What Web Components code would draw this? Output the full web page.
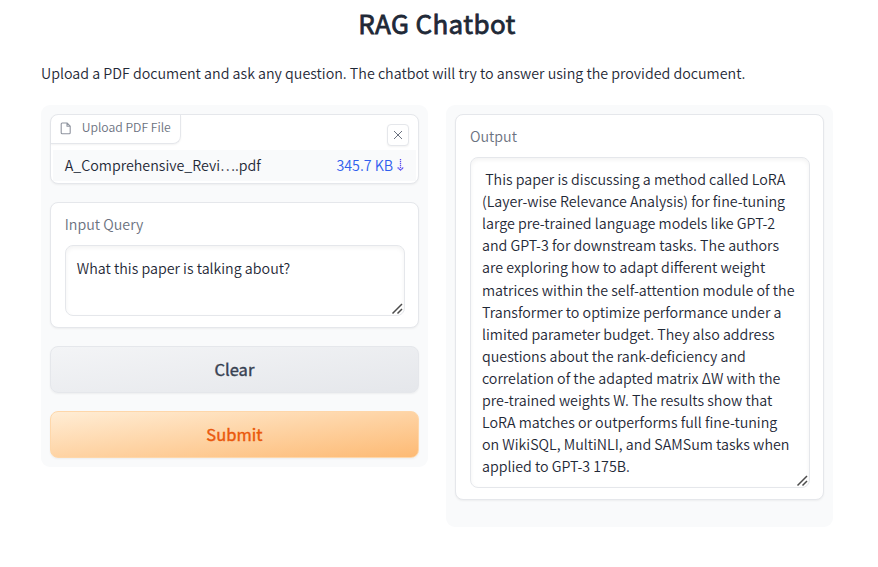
<!DOCTYPE html>
<html lang="en">
<head>
<meta charset="utf-8">
<title>RAG Chatbot</title>
<style>
body{margin:0;background:#fff;color:#1f2937;font:350 14.25px/22.08px "Noto Sans CJK SC","Noto Sans",sans-serif}
</style>
</head>
<body>
<rag-app></rag-app>
<script>
const define=(name,html)=>{
  const t=document.createElement('template');
  t.innerHTML=html;
  customElements.define(name,class extends HTMLElement{
    constructor(){super();this.attachShadow({mode:'open'}).append(t.content.cloneNode(true));}
  });
};

define('ui-panel',`<style>
:host{display:flex;flex-direction:column;gap:18px;box-sizing:border-box;padding:9.2px;background:#f9fafb;border-radius:9px;min-width:0}
</style><slot></slot>`);

define('ui-card',`<style>
:host{display:block;flex:none;box-sizing:border-box;background:#fff;border:1px solid #e5e7eb;border-radius:8px;box-shadow:0 1px 2px rgba(0,0,0,.05)}
</style><slot></slot>`);

define('text-field',`<style>
:host{display:flex;flex-direction:column;height:100%;box-sizing:border-box;padding:10px 12.8px 11px 13.6px}
.label{color:#6b7280;height:22px;margin-bottom:9.8px}
.box{position:relative;flex:1;box-sizing:border-box;border:1px solid #e5e7eb;border-radius:8px;padding:var(--text-top,11.3px) 11px 0;box-shadow:inset 0 2px 4px rgba(0,0,0,.05);white-space:pre}
svg{position:absolute;right:0;bottom:0}
</style><div class="label"><slot name="label"></slot></div>
<div class="box"><slot></slot><svg width="13" height="13" viewBox="0 0 13 13" fill="none" stroke="#4c4c4c" stroke-width="1.5"><path d="M1.5 11.5L11 2M6.5 11.5L11 7"/></svg></div>`);

define('text-line',`<style>:host{display:block;white-space:pre}</style><slot></slot>`);

define('ui-button',`<style>
:host{display:flex;flex:none;align-items:center;justify-content:center;box-sizing:border-box;height:47px;padding-bottom:1.2px;border:1px solid #e5e7eb;border-radius:8px;background:linear-gradient(to bottom right,#f3f4f6,#e5e7eb);box-shadow:0 1px 2px rgba(0,0,0,.05);color:#374151;font-size:16.5px;font-weight:400;-webkit-text-stroke:.4px currentColor}
:host([primary]){border-color:#fed7aa;background:linear-gradient(to bottom right,#ffedd5,#fdba74);color:#ea580c}
</style><span><slot></slot></span>`);

define('file-upload',`<style>
:host{display:flex;flex-direction:column;height:100%;position:relative}
.tab{display:flex;align-items:center;align-self:flex-start;gap:9.5px;box-sizing:border-box;width:130px;height:29px;padding:0 0 3.4px 9px;border:solid #e5e7eb;border-width:0 1px 1px 0;border-radius:8px 0 8px 0;box-shadow:0 1px 2px rgba(0,0,0,.05);color:#6b7280;font-size:12.2px;white-space:nowrap}
.tab svg{opacity:.75;flex:none;position:relative;top:1px}
.close{position:absolute;right:9px;top:9px;width:20px;height:20px;border:1px solid #e5e7eb;border-radius:4px;background:#fff;box-shadow:0 1px 2px rgba(0,0,0,.05);display:grid;place-items:center;color:#6b7280}
.row{display:flex;justify-content:space-between;align-items:center;box-sizing:border-box;height:31px;margin:6px 1.5px 0;padding:0 12px 1.4px;background:#f9fafb}
.size{display:flex;align-items:center;gap:4px;color:#2f5fee}
</style>
<div class="tab"><svg width="12" height="13" viewBox="0 0 12 13" fill="none" stroke="#6b7280" stroke-width="1.1" stroke-linejoin="round"><path d="M7 1H2.2Q1.2 1 1.2 2V10.8Q1.2 11.8 2.2 11.8H9.2Q10.2 11.8 10.2 10.8V4.2ZM7 1V4.2H10.2"/></svg><slot name="label"></slot></div>
<div class="close"><svg width="10" height="10" viewBox="0 0 10 10" fill="none" stroke="currentColor" stroke-width="1"><path d="M1 1L9 9M9 1L1 9"/></svg></div>
<div class="row"><slot name="name"></slot><span class="size"><slot name="size"></slot><svg width="7" height="14" viewBox="0 0 7 14" fill="none" stroke="#5b4df0"><path d="M3.5 1V10" stroke-width="1.3" stroke-dasharray="1.2 .8"/><path d="M.6 9.4L3.5 12.1L6.4 9.4" stroke-width="1.3" stroke-dasharray="1.6 .3"/></svg></span></div>`);

define('rag-app',`<style>
:host{display:block;box-sizing:border-box;width:878px;height:567px;padding:7px 45px 0 41px}
h1{margin:0;height:32px;line-height:32px;text-align:center;font-size:26px;font-weight:400;letter-spacing:.4px;-webkit-text-stroke:.8px currentColor}
p{margin:23px 0 21px;height:22px;white-space:nowrap}
main{display:grid;grid-template-columns:386.8px 386.8px;gap:18.4px;align-items:start}
.file{height:70px}.query{height:126px}.answer{height:386px;--text-top:10.2px}
.in{height:362px}.out{height:422px}
</style>
<h1>RAG Chatbot</h1>
<p>Upload a PDF document and ask any question. The chatbot will try to answer using the provided document.</p>
<main>
<ui-panel class="in">
<ui-card class="file"><file-upload><span slot="label">Upload PDF File</span><span slot="name">A_Comprehensive_Revi….pdf</span><span slot="size">345.7 KB</span></file-upload></ui-card>
<ui-card class="query"><text-field><span slot="label">Input Query</span><text-line>What this paper is talking about?</text-line></text-field></ui-card>
<ui-button>Clear</ui-button>
<ui-button primary>Submit</ui-button>
</ui-panel>
<ui-panel class="out">
<ui-card class="answer"><text-field><span slot="label">Output</span><text-line> This paper is discussing a method called LoRA</text-line><text-line>(Layer-wise Relevance Analysis) for fine-tuning</text-line><text-line>large pre-trained language models like GPT-2</text-line><text-line>and GPT-3 for downstream tasks. The authors</text-line><text-line>are exploring how to adapt different weight</text-line><text-line>matrices within the self-attention module of the</text-line><text-line>Transformer to optimize performance under a</text-line><text-line>limited parameter budget. They also address</text-line><text-line>questions about the rank-deficiency and</text-line><text-line>correlation of the adapted matrix ΔW with the</text-line><text-line>pre-trained weights W. The results show that</text-line><text-line>LoRA matches or outperforms full fine-tuning</text-line><text-line>on WikiSQL, MultiNLI, and SAMSum tasks when</text-line><text-line>applied to GPT-3 175B.</text-line></text-field></ui-card>
</ui-panel>
</main>`);
</script>
</body>
</html>
